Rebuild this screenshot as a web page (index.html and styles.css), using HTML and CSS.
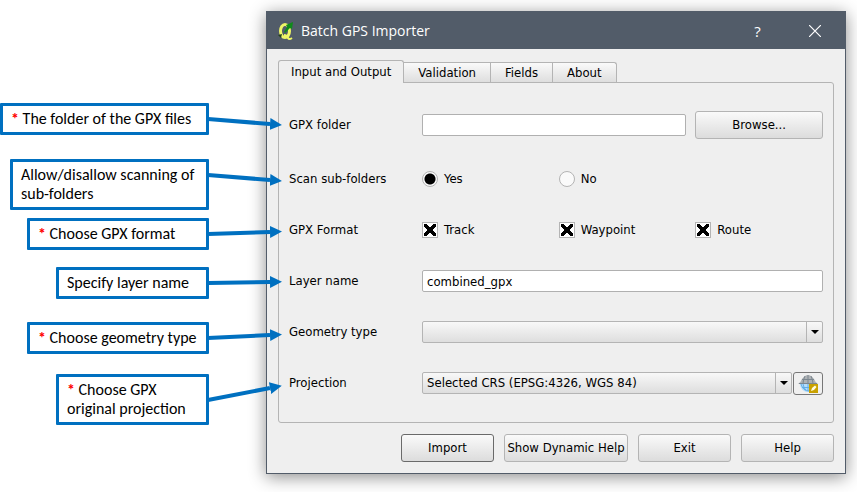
FILE: index.html
```html
<!DOCTYPE html>
<html lang="en">
<head>
<meta charset="utf-8">
<meta name="viewport" content="width=device-width, initial-scale=1">
<title>Batch GPS Importer</title>
<link rel="stylesheet" href="styles.css">
</head>
<body>
<svg width="0" height="0" class="defs" aria-hidden="true">
  <defs>
    <marker id="head" viewBox="0 0 12 12" refX="0" refY="6" markerWidth="12" markerHeight="12" markerUnits="userSpaceOnUse" orient="auto">
      <path d="M0 0L12 6L0 12Z" fill="#0070c0"/>
    </marker>
  </defs>
</svg>
<main class="page">
  <aside class="notes">
    <div class="note note-full"><span class="req">*</span> The folder of the GPX files
      <svg class="arrow" width="74" height="40" aria-hidden="true"><path d="M0 20L62 25" marker-end="url(#head)"/></svg></div>
    <div class="note note-scan">Allow/disallow scanning of<br>sub-folders
      <svg class="arrow" width="74" height="40" aria-hidden="true"><path d="M0 10L62 15" marker-end="url(#head)"/></svg></div>
    <div class="note note-wide note-format"><span class="req">*</span> Choose GPX format
      <svg class="arrow" width="74" height="40" aria-hidden="true"><path d="M0 20L62 18" marker-end="url(#head)"/></svg></div>
    <div class="note note-small note-layer">Specify layer name
      <svg class="arrow" width="74" height="40" aria-hidden="true"><path d="M0 20L62 19" marker-end="url(#head)"/></svg></div>
    <div class="note note-wide note-geometry"><span class="req">*</span> Choose geometry type
      <svg class="arrow" width="74" height="40" aria-hidden="true"><path d="M0 20L62 17" marker-end="url(#head)"/></svg></div>
    <div class="note note-small note-projection"><span class="req">*</span> Choose GPX<br>original projection
      <svg class="arrow" width="74" height="40" aria-hidden="true"><path d="M0 20L62 8" marker-end="url(#head)"/></svg></div>
  </aside>

  <section class="window" aria-label="Batch GPS Importer">
    <header class="titlebar">
      <svg class="logo" width="16" height="20" viewBox="0 0 16 20" aria-hidden="true">
        <ellipse cx="7" cy="10" rx="4.500" ry="6.500" fill="none" stroke="#eef566" stroke-width="3"/>
        <path d="M6 14Q9 14 10 17Q11 19 14 17" fill="none" stroke="#eef566" stroke-width="2"/>
        <path d="M6 11L9 6L8 4L15 1L14 8L12 7L7 12Z" fill="#0f8a1a"/>
        <path d="M0 14L4 13L3 17Z" fill="#24401f"/>
      </svg>
      <h1 class="title">Batch GPS Importer</h1>
      <button class="sys" type="button" aria-label="Context help">?</button>
      <button class="sys" type="button" aria-label="Close"><svg width="12" height="12" viewBox="0 0 12 12"><path d="M0 0L12 12M12 0L0 12" stroke="#fff" stroke-width="1.200"/></svg></button>
    </header>
    <form class="content">
      <div class="tabs" role="tablist">
        <button type="button" class="tab tab-active" role="tab" aria-selected="true">Input and Output</button>
        <button type="button" class="tab" role="tab" aria-selected="false">Validation</button>
        <button type="button" class="tab" role="tab" aria-selected="false">Fields</button>
        <button type="button" class="tab" role="tab" aria-selected="false">About</button>
      </div>
      <div class="panel" role="tabpanel">
        <div class="row row-first">
          <label class="name" for="folder">GPX folder</label>
          <input class="field span2" id="folder" type="text">
          <button class="btn" type="button">Browse...</button>
        </div>
        <div class="row" role="radiogroup" aria-label="Scan sub-folders">
          <span class="name">Scan sub-folders</span>
          <label class="choice"><input type="radio" name="scan" checked>Yes</label>
          <label class="choice"><input type="radio" name="scan">No</label>
        </div>
        <div class="row" role="group" aria-label="GPX Format">
          <span class="name">GPX Format</span>
          <label class="choice"><input type="checkbox" checked>Track</label>
          <label class="choice"><input type="checkbox" checked>Waypoint</label>
          <label class="choice"><input type="checkbox" checked>Route</label>
        </div>
        <div class="row">
          <label class="name" for="layer">Layer name</label>
          <input class="field span3" id="layer" type="text" value="combined_gpx">
        </div>
        <div class="row">
          <label class="name" for="geometry">Geometry type</label>
          <div class="combo span3"><select id="geometry"><option></option></select></div>
        </div>
        <div class="row">
          <label class="name" for="crs">Projection</label>
          <div class="pair span3">
            <div class="combo"><select id="crs"><option>Selected CRS (EPSG:4326, WGS 84)</option></select></div>
            <button class="btn globe" type="button" aria-label="Select CRS">
              <svg width="20" height="19" viewBox="0 0 20 19" aria-hidden="true">
                <path d="M2 10A8 8 0 0 0 18 10Z" fill="#b5dcfa"/>
                <path d="M0 10Q3 8 4 5Q10-3 16 5Q17 8 20 10Z" fill="#aeb2b5"/>
                <path d="M1 9.500H19M4 5.500H16M10 1V10M7 2Q5 6 5 10M13 2Q15 6 15 10" fill="none" stroke="#7c8790"/>
                <path d="M3 10Q5 17 11 17M10 10V17M5 10Q6 15 8 16M4 13.500H12" fill="none" stroke="#62aee6"/>
                <rect x="11" y="10" width="9" height="9" fill="#c9a100"/>
                <path d="M13 17L14 14L17 11.500L18.500 13L16 16Z" fill="#fffbe0"/>
              </svg>
            </button>
          </div>
        </div>
      </div>
      <div class="actions">
        <button class="btn btn-default" type="button">Import</button>
        <button class="btn btn-wide" type="button">Show Dynamic Help</button>
        <button class="btn" type="button">Exit</button>
        <button class="btn" type="button">Help</button>
      </div>
    </form>
  </section>
</main>
</body>
</html>
```
FILE: styles.css
```css
* { box-sizing: border-box; }

body {
  margin: 0;
  background: #fff;
  color: #000;
  font: 13px/16px "DejaVu Sans Condensed", "Noto Sans", sans-serif;
}

button, input, select { font: inherit; color: inherit; margin: 0; }

.defs { position: absolute; }

.page {
  display: grid;
  grid-template-columns: 209px 1fr;
  column-gap: 57px;
  align-items: start;
  padding: 11px 11px 18px 0;
}

/* Callouts */
.notes {
  display: flex;
  flex-direction: column;
  align-items: flex-end;
  padding-top: 92px;
  font: 16px/19px Carlito, Lato, sans-serif;
}

.note {
  position: relative;
  z-index: 1;
  padding: 3px 8px 4px;
  border: 3px solid #0070c0;
  border-radius: 1px;
  background: #fff;
  white-space: nowrap;
}

.note-full { width: 209px; }
.note-scan { width: 199px; margin-top: 24px; }
.note-wide { width: 182px; }
.note-small { width: 153px; }
.note-format { margin-top: 8px; }
.note-layer { margin-top: 17px; }
.note-geometry { margin-top: 23px; }
.note-projection { margin-top: 20px; }

.req { color: #f00; font-weight: bold; }

.arrow {
  position: absolute;
  left: calc(100% + 2px);
  top: 50%;
  transform: translateY(-50%);
  overflow: visible;
}

.arrow path { fill: none; stroke: #0070c0; stroke-width: 4px; }

/* Dialog */
.window {
  border: 1px solid #525c69;
  background: #efefef;
  box-shadow: 0 3px 16px rgba(0, 0, 0, .45);
}

.titlebar {
  display: flex;
  align-items: center;
  height: 37px;
  padding: 0 2px 0 11px;
  background: #525c69;
  color: #fff;
}

.title {
  flex: 1;
  margin: 0 0 0 7px;
  font: 14px/20px "Open Sans", "Noto Sans", sans-serif;
}

.sys {
  width: 57px;
  height: 37px;
  padding: 0;
  border: 0;
  background: none;
  font: 15px/20px "Open Sans", "Noto Sans", sans-serif;
}

.content { padding: 11px; }

.tabs { display: flex; align-items: flex-end; }

.tab {
  height: 20px;
  margin-left: -1px;
  padding: 0 14px;
  border: 1px solid #b4b4b4;
  border-bottom: 0;
  background: linear-gradient(#fafafa, #dedede);
}

.tab:last-child { border-radius: 0 3px 0 0; }

.tab-active {
  position: relative;
  height: 23px;
  margin: 0 0 -1px;
  padding: 0 12px;
  border-radius: 3px 3px 0 0;
  background: #efefef;
}

.panel {
  padding: 28px 10px 25px;
  border: 1px solid #b4b4b4;
  border-radius: 0 3px 3px 3px;
}

.row {
  display: grid;
  grid-template-columns: 124px repeat(3, minmax(0, 1fr));
  column-gap: 9px;
  align-items: center;
  height: 28px;
  margin-top: 23px;
}

.row-first { margin: 0 0 26px; }
.row-first + .row { margin-top: 0; }

.span2 { grid-column: span 2; }
.span3 { grid-column: span 3; }

.field {
  width: 100%;
  height: 22px;
  padding: 0 4px;
  border: 1px solid #b0b0b0;
  border-radius: 2px;
  background: #fff;
}

.btn {
  height: 28px;
  padding: 0;
  border: 1px solid #b4b4b4;
  border-radius: 3px;
  background: linear-gradient(#fafafa, #dcdcdc);
  white-space: nowrap;
}

.choice { display: flex; align-items: center; gap: 6px; }

.choice input {
  appearance: none;
  width: 16px;
  height: 16px;
  border: 1px solid #b4b4b4;
  background: #fafafa;
}

.choice input[type="radio"] { border-radius: 50%; }

.choice input[type="radio"]:checked {
  background: radial-gradient(circle, #000 5px, #fafafa 6px);
}

.choice input[type="checkbox"]:checked {
  background:
    linear-gradient(45deg, transparent 38%, #000 40%, #000 60%, transparent 62%) center / 12px 12px no-repeat,
    linear-gradient(-45deg, transparent 38%, #000 40%, #000 60%, transparent 62%) center / 12px 12px no-repeat,
    #fff;
}

.combo {
  position: relative;
  flex: 1;
  height: 22px;
  border: 1px solid #b4b4b4;
  border-radius: 2px;
  background: linear-gradient(#f8f8f8, #dedede);
}

.combo select {
  appearance: none;
  display: block;
  width: 100%;
  height: 20px;
  padding: 0 20px 0 4px;
  border: 0;
  background: none;
}

.combo::before {
  content: "";
  position: absolute;
  top: 0;
  bottom: 0;
  right: 15px;
  border-left: 1px solid #b4b4b4;
}

.combo::after {
  content: "";
  position: absolute;
  top: 8px;
  right: 3px;
  border: 4px solid transparent;
  border-top-color: #000;
  border-bottom: 0;
}

.pair { display: flex; align-items: center; gap: 1px; }

.globe {
  display: grid;
  place-items: center;
  width: 30px;
  height: 23px;
  border-color: #777;
  background: #f0f0f0;
}

.actions {
  display: flex;
  justify-content: flex-end;
  gap: 10px;
  margin-top: 11px;
}

.actions .btn { width: 93px; }
.actions .btn-wide { width: 124px; }
.btn-default { border-color: #6a6a6a; }
```
